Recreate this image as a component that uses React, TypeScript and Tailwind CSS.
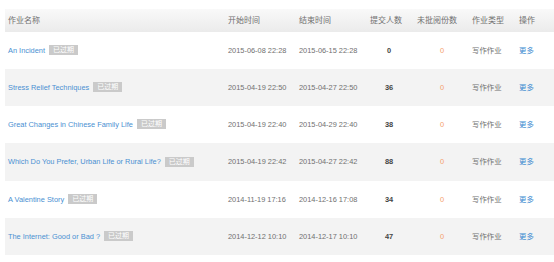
import React from "react";

type Row = {
  title: string;
  start: string;
  end: string;
  count: string;
};

const rows: Row[] = [
  { title: "An Incident", start: "2015-06-08 22:28", end: "2015-06-15 22:28", count: "0" },
  { title: "Stress Relief Techniques", start: "2015-04-19 22:50", end: "2015-04-27 22:50", count: "36" },
  { title: "Great Changes in Chinese Family Life", start: "2015-04-19 22:40", end: "2015-04-29 22:40", count: "38" },
  { title: "Which Do You Prefer, Urban Life or Rural Life?", start: "2015-04-19 22:42", end: "2015-04-27 22:42", count: "88" },
  { title: "A Valentine Story", start: "2014-11-19 17:16", end: "2014-12-16 17:08", count: "34" },
  { title: "The Internet: Good or Bad ?", start: "2014-12-12 10:10", end: "2014-12-17 10:10", count: "47" },
];

const font = { fontFamily: '"Liberation Sans", Arial, "Noto Sans CJK SC", sans-serif' };

const cols = "grid grid-cols-[220px_71px_71px_47px_55px_47px_38px]";

export default function App() {
  return (
    <div className="w-[554px] h-[262px] bg-white overflow-hidden pt-[9px] pl-[5px]" style={font}>
      <div className="w-[549px]">
        <div className={`${cols} h-[23px] items-center bg-gradient-to-b from-[#f9f9f9] to-[#ebebeb] text-[8px] text-[#707070]`}>
          <div className="pl-[3px]">作业名称</div>
          <div className="pl-[3px]">开始时间</div>
          <div className="pl-[3px]">结束时间</div>
          <div className="pl-[3px]">提交人数</div>
          <div className="pl-[3px]">未批阅份数</div>
          <div className="pl-[3px]">作业类型</div>
          <div className="pl-[3px]">操作</div>
        </div>
        {rows.map((r, i) => (
          <div
            key={i}
            className={`${cols} ${i === 3 ? "h-[38px]" : "h-[37px]"} items-center text-[7.4px] ${i % 2 === 1 ? "bg-[#f3f3f3]" : "bg-white"}`}
          >
            <div className="pl-[3px] flex items-center gap-[4px]">
              <span className="text-[#4a90d2]">{r.title}</span>
              <span className="bg-[#cacaca] text-white text-[7px] leading-[10px] h-[10px] px-[4px]">已过期</span>
            </div>
            <div className="pl-[3px] text-[#707070]">{r.start}</div>
            <div className="pl-[3px] text-[#707070]">{r.end}</div>
            <div className="pl-[3px] pr-[6px] text-center font-bold text-[#444]">{r.count}</div>
            <div className="pl-[3px] pr-[2px] text-center text-[#f5a06c]">0</div>
            <div className="pl-[3px] text-[#707070]">写作作业</div>
            <div className="pl-[3px] text-[#3a8ad0]">更多</div>
          </div>
        ))}
      </div>
    </div>
  );
}
